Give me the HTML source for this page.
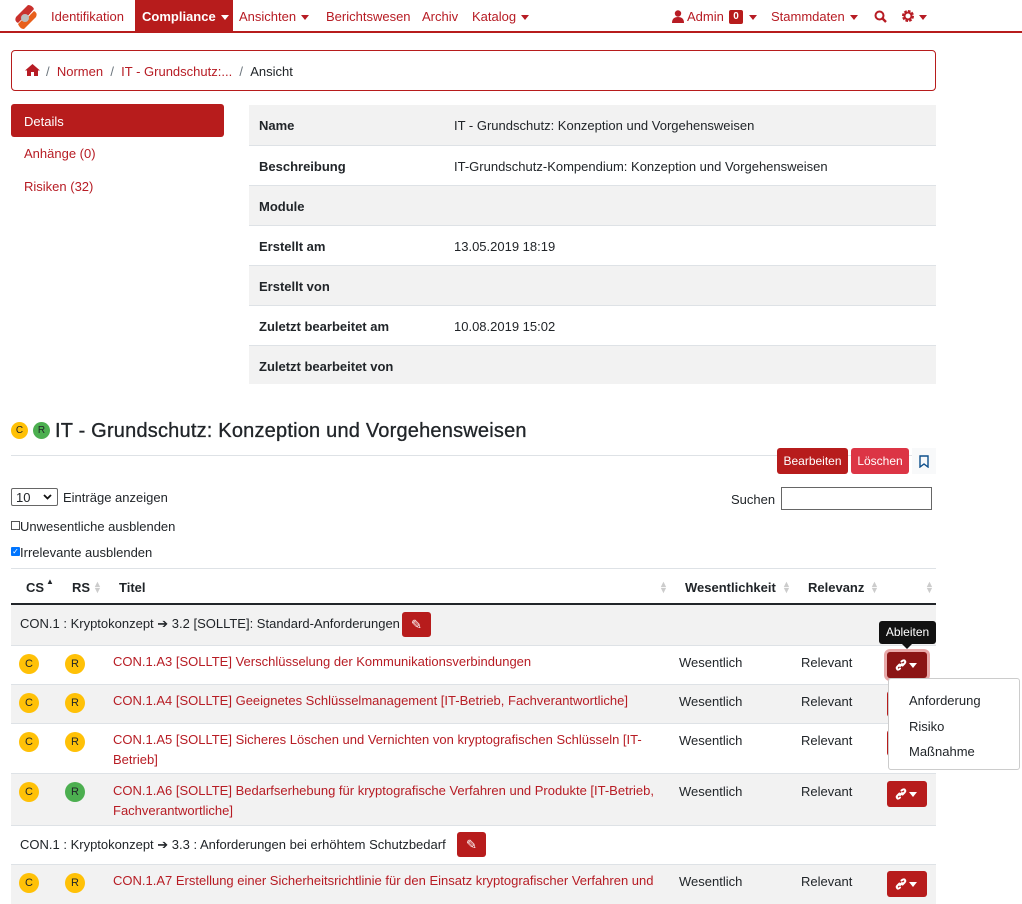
<!DOCTYPE html>
<html><head><meta charset="utf-8">
<style>
*{box-sizing:border-box;margin:0;padding:0}
body{width:1022px;height:894px;overflow:hidden;background:#fff;font-family:"Liberation Sans",Arial,sans-serif;font-size:13px;color:#212529;position:relative}
.a{position:absolute;white-space:nowrap}
.red{color:#b71c24}
.nav{position:absolute;left:0;top:0;width:1022px;height:33px;border-bottom:2px solid #b71c1c}
.caret{display:inline-block;width:0;height:0;border-left:4px solid transparent;border-right:4px solid transparent;border-top:5px solid currentColor;vertical-align:middle;margin-left:5px}
.row{position:absolute;left:249px;width:687px;height:40px;border-top:1px solid #dee2e6}
.g{background:#f2f2f2}
.row b{position:absolute;left:10px;top:13px}
.row span{position:absolute;left:205px;top:13px}
.tr{position:absolute;left:11px;width:925px;border-top:1px solid #dee2e6}
.b{position:absolute;width:20px;height:20px;border-radius:50%;background:#ffc107;font-size:11px;text-align:center;line-height:20px;color:#212529}
.gr{background:#4caf50}
.t{position:absolute;left:102px;color:#b71c24;line-height:20px;white-space:normal;width:560px}
.btn{position:absolute;left:876px;width:40px;height:26px;background:#b71c1c;border-radius:3px;white-space:nowrap}
.btn svg{position:absolute;left:8px;top:7px}
.btn .caret{position:absolute;left:22px;top:11px;margin:0;border-top-color:#fff}
.srt{position:absolute;color:#ccc;font-size:9px;line-height:6px}
</style></head><body>
<div class="nav">
<svg class="a" style="left:10px;top:3px" width="30" height="27" viewBox="0 0 30 27"><path d="M18 2 L6 14 Q4 18 8 20 L12 16 Q14 13 17 14 L24 6 Q22 2 18 2Z" fill="#c9302c"/><path d="M14 26 L26 14 Q28 10 24 8 L20 12 Q18 15 15 14 L8 21 Q10 26 14 26Z" fill="#e8601c"/><circle cx="15" cy="15" r="4" fill="#bbb"/></svg>
<div class="a red" style="left:51px;top:9px">Identifikation</div>
<div class="a" style="left:135px;top:0;width:98px;height:31px;background:#b71c1c;color:#fff;font-weight:bold;padding:9px 7px">Compliance<span class="caret"></span></div>
<div class="a red" style="left:239px;top:9px">Ansichten<span class="caret"></span></div>
<div class="a red" style="left:326px;top:9px">Berichtswesen</div>
<div class="a red" style="left:422px;top:9px">Archiv</div>
<div class="a red" style="left:472px;top:9px">Katalog<span class="caret"></span></div>
<svg class="a" style="left:672px;top:10px" width="12" height="13" viewBox="0 0 12 13"><circle cx="6" cy="3.5" r="3.2" fill="#b71c24"/><path d="M0 13 Q0 7 6 7 Q12 7 12 13Z" fill="#b71c24"/></svg>
<div class="a red" style="left:687px;top:9px">Admin</div>
<div class="a" style="left:729px;top:10px;width:14px;height:14px;background:#b71c1c;color:#fff;font-size:10px;font-weight:bold;text-align:center;line-height:14px;border-radius:2px">0</div>
<div class="a red" style="left:744px;top:9px"><span class="caret" style="color:#b71c24"></span></div>
<div class="a red" style="left:771px;top:9px">Stammdaten<span class="caret"></span></div>
<svg class="a" style="left:874px;top:10px" width="13" height="13" viewBox="0 0 13 13"><circle cx="5.5" cy="5.5" r="4" stroke="#b71c24" stroke-width="2" fill="none"/><path d="M8.5 8.5 L12 12" stroke="#b71c24" stroke-width="2.4"/></svg>
<svg class="a" style="left:901px;top:9px" width="14" height="14" viewBox="0 0 14 14"><circle cx="7" cy="7" r="4.5" fill="none" stroke="#b71c24" stroke-width="3" stroke-dasharray="2.4 1.1"/><circle cx="7" cy="7" r="3.5" fill="none" stroke="#b71c24" stroke-width="2"/></svg>
<div class="a red" style="left:914px;top:9px"><span class="caret"></span></div>
</div>
<div class="a" style="left:11px;top:50px;width:925px;height:41px;border:1px solid #b71c1c;border-radius:4px"></div>
<svg class="a" style="left:25px;top:64px" width="15" height="12" viewBox="0 0 15 12"><path d="M7.5 0 L15 6.5 L13 6.5 L13 12 L9 12 L9 8 L6 8 L6 12 L2 12 L2 6.5 L0 6.5Z" fill="#b71c24"/></svg>
<div class="a" style="left:46px;top:64px;color:#6c757d">/ <span class="red">&nbsp;Normen&nbsp;</span> / <span class="red">&nbsp;IT - Grundschutz:...&nbsp;</span> / <span style="color:#212529">&nbsp;Ansicht</span></div>
<div class="a" style="left:11px;top:104px;width:213px;height:33px;background:#b71c1c;color:#fff;padding:10px 13px;border-radius:3px">Details</div>
<div class="a red" style="left:24px;top:146px">Anhänge (0)</div>
<div class="a red" style="left:24px;top:179px">Risiken (32)</div>
<div class="row g" style="top:105px;border-top:0"><b>Name</b><span>IT - Grundschutz: Konzeption und Vorgehensweisen</span></div>
<div class="row" style="top:145px"><b>Beschreibung</b><span>IT-Grundschutz-Kompendium: Konzeption und Vorgehensweisen</span></div>
<div class="row g" style="top:185px"><b>Module</b></div>
<div class="row" style="top:225px"><b>Erstellt am</b><span>13.05.2019 18:19</span></div>
<div class="row g" style="top:265px"><b>Erstellt von</b></div>
<div class="row" style="top:305px"><b>Zuletzt bearbeitet am</b><span>10.08.2019 15:02</span></div>
<div class="row g" style="top:345px;height:39px"><b>Zuletzt bearbeitet von</b></div>
<div class="b" style="left:11px;top:422px;width:17px;height:17px;line-height:17px;font-size:10px">C</div>
<div class="b gr" style="left:33px;top:422px;width:17px;height:17px;line-height:17px;font-size:10px">R</div>
<div class="a" style="left:55px;top:420px;font-size:20px;letter-spacing:0.2px;-webkit-text-stroke:0.3px #212529">IT - Grundschutz: Konzeption und Vorgehensweisen</div>
<div class="a" style="left:11px;top:455px;width:925px;border-top:1px solid #dee2e6"></div>
<div class="a" style="left:777px;top:448px;width:71px;height:26px;background:#b71c1c;color:#fff;border-radius:3px;font-size:12px;text-align:center;line-height:26px">Bearbeiten</div>
<div class="a" style="left:851px;top:448px;width:58px;height:26px;background:#dc3545;color:#fff;border-radius:3px;font-size:12px;text-align:center;line-height:26px">Löschen</div>
<div class="a" style="left:912px;top:448px;width:24px;height:26px;background:#f8f9fa"></div>
<svg class="a" style="left:919px;top:455px" width="10" height="13" viewBox="0 0 10 13"><path d="M1 1H9V12L5 9L1 12Z" fill="none" stroke="#0d4f8b" stroke-width="1.4"/></svg>
<div class="a" style="left:11px;top:488px;width:47px;height:18px;border:1px solid #666;border-radius:2px;padding:1px 4px">10 <svg style="position:absolute;right:5px;top:5px" width="9" height="6" viewBox="0 0 9 6"><path d="M1 1L4.5 4.5L8 1" stroke="#111" stroke-width="1.8" fill="none"/></svg></div>
<div class="a" style="left:63px;top:490px">Einträge anzeigen</div>
<div class="a" style="left:731px;top:492px">Suchen</div>
<div class="a" style="left:781px;top:487px;width:151px;height:23px;border:1px solid #666"></div>
<div class="a" style="left:11px;width:9px;height:9px;border:1px solid #555;top:521px"></div>
<div class="a" style="left:20px;top:519px">Unwesentliche ausblenden</div>
<div class="a" style="left:11px;top:547px;width:9px;height:9px;background:#0075ff;border-radius:1px;color:#fff;font-size:8px;line-height:9px;text-align:center">✓</div>
<div class="a" style="left:20px;top:545px">Irrelevante ausblenden</div>
<div class="a" style="left:11px;top:568px;width:925px;border-top:1px solid #dee2e6"></div>
<div class="a" style="left:26px;top:580px;font-weight:bold">CS</div><div class="a" style="left:46px;top:577px;font-size:8px">▲</div>
<div class="a" style="left:72px;top:580px;font-weight:bold">RS</div>
<div class="a" style="left:119px;top:580px;font-weight:bold">Titel</div>
<div class="a" style="left:685px;top:580px;font-weight:bold">Wesentlichkeit</div>
<div class="a" style="left:808px;top:580px;font-weight:bold">Relevanz</div>
<div class="srt" style="left:93px;top:581px">▲<br>▼</div><div class="srt" style="left:659px;top:581px">▲<br>▼</div><div class="srt" style="left:782px;top:581px">▲<br>▼</div><div class="srt" style="left:870px;top:581px">▲<br>▼</div><div class="srt" style="left:925px;top:581px">▲<br>▼</div>
<div class="a" style="left:11px;top:603px;width:925px;border-top:2px solid #212529"></div>

<div class="tr g" style="top:605px;height:40px;border-top:0"><div class="a" style="left:9px;top:11px">CON.1 : Kryptokonzept ➔ 3.2 [SOLLTE]: Standard-Anforderungen</div><div class="a" style="left:391px;top:7px;width:29px;height:25px;background:#b71c1c;border-radius:3px;color:#fff;text-align:center;line-height:25px;font-size:13px">✎</div></div>
<div class="tr" style="top:645px;height:39px"><div class="b" style="left:8px;top:8px">C</div><div class="b" style="left:54px;top:8px">R</div><div class="t" style="top:6px">CON.1.A3 [SOLLTE] Verschlüsselung der Kommunikationsverbindungen</div><div class="a" style="left:668px;top:9px">Wesentlich</div><div class="a" style="left:790px;top:9px">Relevant</div><div class="btn" style="top:6px;background:#8b1515;box-shadow:0 0 0 3px #e8a9a9"><svg width="12" height="12" viewBox="0 0 12 12"><path d="M5 7L7 5M4.5 5.5L2.5 7.5Q1 9 2.5 10.5Q4 11 5 9.5M7.5 6.5L9.5 4.5Q11 3 9.5 1.5Q8 1 6.5 2.5" stroke="#fff" stroke-width="2" fill="none" stroke-linecap="round"/></svg><span class="caret"></span></div></div>
<div class="tr g" style="top:684px;height:39px"><div class="b" style="left:8px;top:8px">C</div><div class="b" style="left:54px;top:8px">R</div><div class="t" style="top:6px">CON.1.A4 [SOLLTE] Geeignetes Schlüsselmanagement [IT-Betrieb, Fachverantwortliche]</div><div class="a" style="left:668px;top:9px">Wesentlich</div><div class="a" style="left:790px;top:9px">Relevant</div><div class="btn" style="top:6px"></div></div>
<div class="tr" style="top:723px;height:50px"><div class="b" style="left:8px;top:8px">C</div><div class="b" style="left:54px;top:8px">R</div><div class="t" style="top:6px">CON.1.A5 [SOLLTE] Sicheres Löschen und Vernichten von kryptografischen Schlüsseln [IT-Betrieb]</div><div class="a" style="left:668px;top:9px">Wesentlich</div><div class="a" style="left:790px;top:9px">Relevant</div><div class="btn" style="top:6px"></div></div>
<div class="tr g" style="top:773px;height:52px"><div class="b" style="left:8px;top:8px">C</div><div class="b gr" style="left:54px;top:8px">R</div><div class="t" style="top:7px">CON.1.A6 [SOLLTE] Bedarfserhebung für kryptografische Verfahren und Produkte [IT-Betrieb, Fachverantwortliche]</div><div class="a" style="left:668px;top:10px">Wesentlich</div><div class="a" style="left:790px;top:10px">Relevant</div><div class="btn" style="top:7px"><svg width="12" height="12" viewBox="0 0 12 12"><path d="M5 7L7 5M4.5 5.5L2.5 7.5Q1 9 2.5 10.5Q4 11 5 9.5M7.5 6.5L9.5 4.5Q11 3 9.5 1.5Q8 1 6.5 2.5" stroke="#fff" stroke-width="2" fill="none" stroke-linecap="round"/></svg><span class="caret"></span></div></div>
<div class="tr" style="top:825px;height:39px"><div class="a" style="left:9px;top:11px">CON.1 : Kryptokonzept ➔ 3.3 : Anforderungen bei erhöhtem Schutzbedarf</div><div class="a" style="left:446px;top:6px;width:29px;height:25px;background:#b71c1c;border-radius:3px;color:#fff;text-align:center;line-height:25px">✎</div></div>
<div class="tr g" style="top:864px;height:40px"><div class="b" style="left:8px;top:8px">C</div><div class="b" style="left:54px;top:8px">R</div><div class="t" style="top:6px;width:560px">CON.1.A7 Erstellung einer Sicherheitsrichtlinie für den Einsatz kryptografischer Verfahren und</div><div class="a" style="left:668px;top:9px">Wesentlich</div><div class="a" style="left:790px;top:9px">Relevant</div><div class="btn" style="top:6px"><svg width="12" height="12" viewBox="0 0 12 12"><path d="M5 7L7 5M4.5 5.5L2.5 7.5Q1 9 2.5 10.5Q4 11 5 9.5M7.5 6.5L9.5 4.5Q11 3 9.5 1.5Q8 1 6.5 2.5" stroke="#fff" stroke-width="2" fill="none" stroke-linecap="round"/></svg><span class="caret"></span></div></div>

<div class="a" style="left:879px;top:621px;width:57px;height:23px;background:#111;color:#fff;border-radius:3px;font-size:12px;text-align:center;line-height:23px">Ableiten</div>
<div class="a" style="left:902px;top:644px;width:0;height:0;border-left:5px solid transparent;border-right:5px solid transparent;border-top:5px solid #111"></div>
<div class="a" style="left:888px;top:678px;width:132px;height:92px;background:#fff;border:1px solid #ccc;border-radius:3px">
<div class="a" style="left:20px;top:14px">Anforderung</div>
<div class="a" style="left:20px;top:40px">Risiko</div>
<div class="a" style="left:20px;top:65px">Maßnahme</div>
</div>
</body></html>
